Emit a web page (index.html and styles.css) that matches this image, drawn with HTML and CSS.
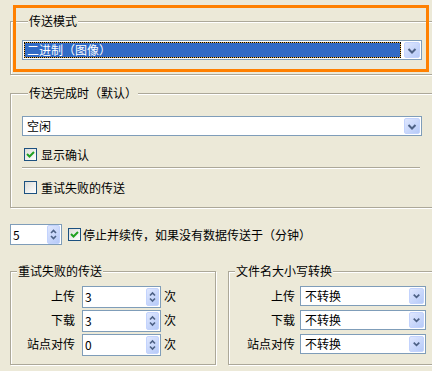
FILE: index.html
```html
<!DOCTYPE html>
<html lang="zh">
<head>
    <meta charset="UTF-8">
    <title>传送设置</title>
    <link rel="stylesheet" href="styles.css">
</head>
<body>
    <div class="panel">

        <div class="group full mode-group">
            <div class="legend">传送模式</div>
            <div class="combo wide">
                <span class="combo-text selected">二进制（图像）</span>
                <span class="drop">
                    <svg width="14" height="15" viewBox="0 0 14 15"><path d="M3.5 6 L7 9.5 L10.5 6" fill="none" stroke="#4d6185" stroke-width="2"/></svg>
                </span>
            </div>
        </div>

        <div class="group full done-group">
            <div class="legend">传送完成时（默认）</div>
            <div class="combo wide">
                <span class="combo-text">空闲</span>
                <span class="drop">
                    <svg width="14" height="15" viewBox="0 0 14 15"><path d="M3.5 6 L7 9.5 L10.5 6" fill="none" stroke="#4d6185" stroke-width="2"/></svg>
                </span>
            </div>
            <label class="check first">
                <span class="box"><svg width="11" height="11" viewBox="0 0 11 11"><path d="M2 5 L4.5 7.5 L9 3" fill="none" stroke="#21a121" stroke-width="2"/></svg></span>
                显示确认
            </label>
            <div class="sep"></div>
            <label class="check second">
                <span class="box"></span>
                重试失败的传送
            </label>
        </div>

        <div class="timeout-row">
            <div class="spin wide-spin">
                <span class="spin-text">5</span>
                <span class="spin-btn">
                    <svg width="11" height="17" viewBox="0 0 11 17"><path d="M3 7 L5.5 4.5 L8 7 M3 10 L5.5 12.5 L8 10" fill="none" stroke="#4d6185" stroke-width="1.6"/></svg>
                </span>
            </div>
            <label class="check">
                <span class="box"><svg width="11" height="11" viewBox="0 0 11 11"><path d="M2 5 L4.5 7.5 L9 3" fill="none" stroke="#21a121" stroke-width="2"/></svg></span>
                停止并续传，如果没有数据传送于（分钟）
            </label>
        </div>

        <div class="bottom">
            <div class="group retry-group">
                <div class="legend">重试失败的传送</div>
                <div class="rows">
                    <div class="row">
                        <span class="label">上传</span>
                        <div class="spin num">
                            <span class="spin-text">3</span>
                            <span class="spin-btn"><svg width="11" height="18" viewBox="0 0 11 18"><path d="M3 7.5 L5.5 5 L8 7.5 M3 10.5 L5.5 13 L8 10.5" fill="none" stroke="#4d6185" stroke-width="1.6"/></svg></span>
                        </div>
                        <span class="unit">次</span>
                    </div>
                    <div class="row">
                        <span class="label">下载</span>
                        <div class="spin num">
                            <span class="spin-text">3</span>
                            <span class="spin-btn"><svg width="11" height="18" viewBox="0 0 11 18"><path d="M3 7.5 L5.5 5 L8 7.5 M3 10.5 L5.5 13 L8 10.5" fill="none" stroke="#4d6185" stroke-width="1.6"/></svg></span>
                        </div>
                        <span class="unit">次</span>
                    </div>
                    <div class="row">
                        <span class="label">站点对传</span>
                        <div class="spin num">
                            <span class="spin-text">0</span>
                            <span class="spin-btn"><svg width="11" height="18" viewBox="0 0 11 18"><path d="M3 7.5 L5.5 5 L8 7.5 M3 10.5 L5.5 13 L8 10.5" fill="none" stroke="#4d6185" stroke-width="1.6"/></svg></span>
                        </div>
                        <span class="unit">次</span>
                    </div>
                </div>
            </div>

            <div class="group full case-group">
                <div class="legend">文件名大小写转换</div>
                <div class="rows">
                    <div class="row">
                        <span class="label">上传</span>
                        <div class="combo small">
                            <span class="combo-text">不转换</span>
                            <span class="drop"><svg width="14" height="14" viewBox="0 0 14 14"><path d="M4 5.5 L7 8.5 L10 5.5" fill="none" stroke="#4d6185" stroke-width="1.8"/></svg></span>
                        </div>
                    </div>
                    <div class="row">
                        <span class="label">下载</span>
                        <div class="combo small">
                            <span class="combo-text">不转换</span>
                            <span class="drop"><svg width="14" height="14" viewBox="0 0 14 14"><path d="M4 5.5 L7 8.5 L10 5.5" fill="none" stroke="#4d6185" stroke-width="1.8"/></svg></span>
                        </div>
                    </div>
                    <div class="row">
                        <span class="label">站点对传</span>
                        <div class="combo small">
                            <span class="combo-text">不转换</span>
                            <span class="drop"><svg width="14" height="14" viewBox="0 0 14 14"><path d="M4 5.5 L7 8.5 L10 5.5" fill="none" stroke="#4d6185" stroke-width="1.8"/></svg></span>
                        </div>
                    </div>
                </div>
            </div>
        </div>

    </div>

    <div class="focus-ring"></div>
</body>
</html>
```

FILE: styles.css
```css
* {
    box-sizing: border-box;
}

body {
    margin: 0;
    height: 371px;
    position: relative;
    overflow: hidden;
    background-color: #ece9d8;
    color: #000;
    font-family: "Noto Sans CJK SC", "Liberation Sans", sans-serif;
    font-size: 12px;
    line-height: 14px;
}

.panel {
    padding: 21px 0 0 10px;
}

/* etched group box */
.group {
    border: 1px solid #aca899;
    box-shadow: inset 1px 1px #fff, 1px 1px #fff;
}

.group.full {
    margin-right: -10px;
}

.legend {
    display: table;
    margin: -8px 0 0 6px;
    padding: 0 1px;
    background-color: #ece9d8;
}

.mode-group {
    padding: 0 0 14px 11px;
}

.mode-group .combo {
    margin-top: 12px;
}

.done-group {
    margin-top: 18px;
    padding: 0 0 13px 11px;
}

.done-group .combo {
    margin-top: 16px;
}

/* combo box */
.combo {
    display: flex;
    height: 20px;
    padding: 1px;
    border: 1px solid #7f9db9;
    background-color: #fff;
}

.combo.wide {
    width: 400px;
}

.combo.small {
    width: 126px;
}

.combo-text {
    flex: 1;
    padding-left: 3px;
    line-height: 16px;
}

.combo-text.selected {
    margin-right: 3px;
    padding-left: 2px;
    line-height: 14px;
    color: #fff;
    border: 1px dotted #000;
    background: linear-gradient(#316ac5, #316ac5) padding-box, #e8b04a border-box;
}

.drop {
    display: flex;
    align-items: center;
    justify-content: center;
    width: 16px;
    border: 1px solid #c3d3fd;
    border-radius: 2px;
    background: linear-gradient(135deg, #dfe7fe, #b6caf8);
}

.combo.small .drop {
    width: 15px;
}

/* check boxes */
.check {
    display: flex;
    align-items: center;
    gap: 4px;
    height: 13px;
    white-space: nowrap;
}

.box {
    display: flex;
    align-items: center;
    justify-content: center;
    width: 13px;
    height: 13px;
    border: 1px solid #1c5180;
    background: linear-gradient(135deg, #dcdcd7, #fff);
}

.done-group .check {
    margin-left: 2px;
}

.check.first {
    margin-top: 12px;
}

.check.second {
    margin-top: 12px;
}

.sep {
    width: 398px;
    height: 2px;
    margin-top: 6px;
    border-top: 1px solid #aca899;
    border-bottom: 1px solid #fff;
}

/* spin boxes */
.timeout-row {
    display: flex;
    align-items: center;
    gap: 6px;
    margin-top: 16px;
}

.timeout-row .check {
    gap: 2px;
}

.spin {
    display: flex;
    height: 21px;
    padding: 0 1px 0 0;
    border: 1px solid #7f9db9;
    background-color: #fff;
}

.wide-spin {
    width: 52px;
}

.spin-text {
    flex: 1;
    padding-left: 2px;
    line-height: 19px;
}

.spin-btn {
    display: flex;
    align-items: center;
    justify-content: center;
    width: 13px;
    border: 1px solid #c3d3fd;
    border-radius: 2px;
    background: linear-gradient(135deg, #dfe7fe, #b6caf8);
}

/* bottom pair of groups */
.bottom {
    display: flex;
    gap: 12px;
    margin-top: 26px;
}

.retry-group {
    width: 206px;
    padding: 0 0 8px 0;
}

.case-group {
    flex: 1;
    padding: 0 0 8px 0;
}

.rows {
    display: flex;
    flex-direction: column;
    gap: 2px;
    margin-top: 8px;
}

.row {
    display: flex;
    align-items: flex-start;
    height: 22px;
}

.label {
    line-height: 20px;
    text-align: right;
}

.retry-group .label {
    width: 64px;
    margin-right: 7px;
}

.case-group .label {
    width: 66px;
    margin-right: 5px;
}

.spin.num {
    width: 79px;
    height: 22px;
}

.spin.num .spin-text {
    line-height: 20px;
}

.spin.num .spin-btn {
    margin: 1px 0;
}

.unit {
    margin-left: 3px;
    line-height: 20px;
}

/* orange focus highlight drawn over the first group */
.focus-ring {
    position: absolute;
    left: 13px;
    top: 5px;
    width: 416px;
    height: 67px;
    border: 3px solid #ff8000;
}
```
